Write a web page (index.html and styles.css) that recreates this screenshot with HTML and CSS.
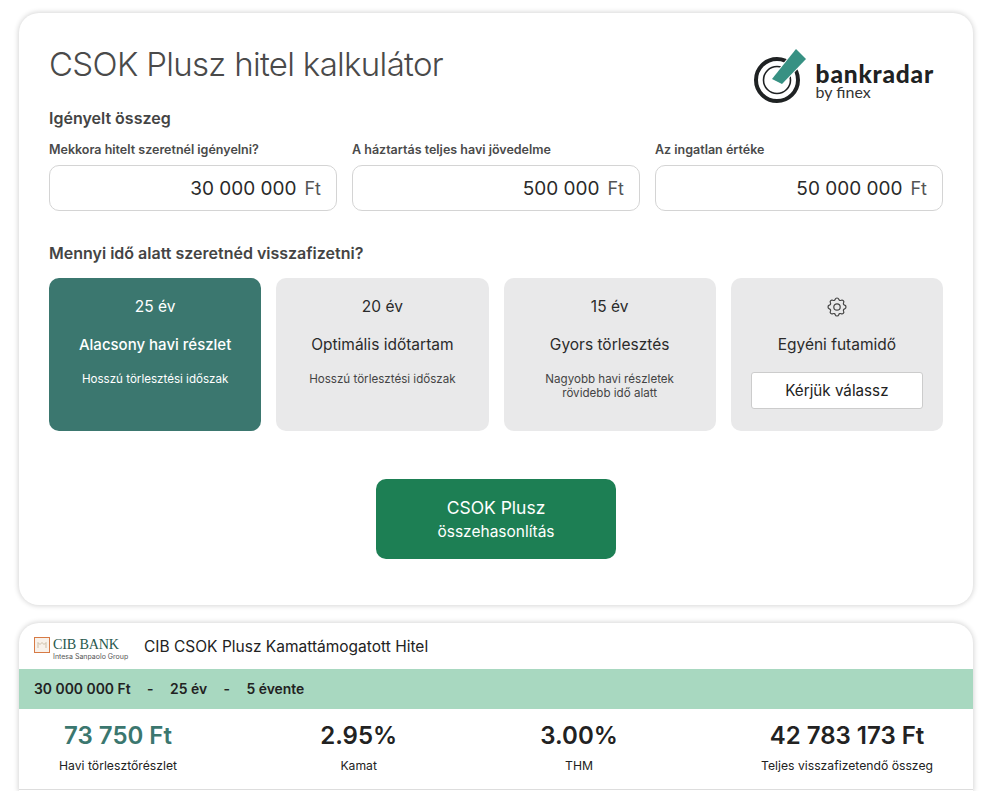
FILE: index.html
```html
<!DOCTYPE html>
<html>

<head>
    <meta charset="UTF-8">
    <meta name="viewport" content="width=device-width, initial-scale=1.0">
    <title>CSOK Plusz hitel kalkulátor</title>
    <link rel="stylesheet" href="styles.css">
</head>

<body>
    <div class="card calc">
        <div class="top">
            <h1>CSOK Plusz hitel kalkulátor</h1>
            <div class="logo">
                <svg class="logo-mark" width="67" height="58" viewBox="0 0 67 58">
                    <circle cx="28" cy="33" r="21" fill="none" stroke="#1f2223" stroke-width="4" />
                    <circle cx="28" cy="33" r="13.5" fill="none" stroke="#1f2223" stroke-width="1.6" />
                    <polygon points="23,32 47,2 57,12 33,37" fill="#379183" stroke="#fff" stroke-width="2" />
                    <polygon points="23,32 47,2 57,12 33,37" fill="#379183" />
                </svg>
                <div class="logo-text">
                    <div class="logo-name">bankradar</div>
                    <div class="logo-sub">by finex</div>
                </div>
            </div>
        </div>

        <h2 class="section-title">Igényelt összeg</h2>
        <div class="fields">
            <div class="field">
                <label>Mekkora hitelt szeretnél igényelni?</label>
                <div class="input"><span class="value">30 000 000</span><span class="unit">Ft</span></div>
            </div>
            <div class="field">
                <label>A háztartás teljes havi jövedelme</label>
                <div class="input"><span class="value">500 000</span><span class="unit">Ft</span></div>
            </div>
            <div class="field">
                <label>Az ingatlan értéke</label>
                <div class="input"><span class="value">50 000 000</span><span class="unit">Ft</span></div>
            </div>
        </div>

        <h2 class="section-title term-title">Mennyi idő alatt szeretnéd visszafizetni?</h2>
        <div class="options">
            <div class="option selected">
                <div class="years">25 év</div>
                <div class="name">Alacsony havi részlet</div>
                <div class="note">Hosszú törlesztési időszak</div>
            </div>
            <div class="option">
                <div class="years">20 év</div>
                <div class="name">Optimális időtartam</div>
                <div class="note">Hosszú törlesztési időszak</div>
            </div>
            <div class="option">
                <div class="years">15 év</div>
                <div class="name">Gyors törlesztés</div>
                <div class="note">Nagyobb havi részletek<br>rövidebb idő alatt</div>
            </div>
            <div class="option">
                <div class="years gear">
                    <svg width="24" height="24" viewBox="0 0 24 24" fill="none" stroke="#444" stroke-width="1.2" stroke-linecap="round" stroke-linejoin="round">
                        <path d="M10.3 3.2c.4-1.6 3-1.6 3.4 0 .3 1.1 1.5 1.6 2.5 1.1 1.5-.9 3.3.9 2.4 2.4-.5 1-.1 2.2 1.1 2.5 1.7.4 1.7 3.2 0 3.6-1.2.3-1.6 1.5-1.1 2.5.9 1.5-.9 3.3-2.4 2.4-1-.5-2.2-.1-2.5 1.1-.4 1.6-3 1.6-3.4 0-.3-1.2-1.5-1.6-2.5-1.1-1.5.9-3.3-.9-2.4-2.4.5-1 .1-2.2-1.1-2.5-1.7-.4-1.7-3.2 0-3.6 1.2-.3 1.6-1.5 1.1-2.5-.9-1.5.9-3.3 2.4-2.4 1 .5 2.2 0 2.5-1.1z" />
                        <circle cx="12" cy="11" r="3.2" />
                    </svg>
                </div>
                <div class="name">Egyéni futamidő</div>
                <button class="pick">Kérjük válassz</button>
            </div>
        </div>

        <div class="actions">
            <button class="compare">
                <span class="compare-main">CSOK Plusz</span>
                <span class="compare-sub">összehasonlítás</span>
            </button>
        </div>
    </div>

    <div class="card offer">
        <div class="offer-head">
            <div class="bank-logo">
                <svg class="bank-mark" width="16" height="16" viewBox="0 0 16 16">
                    <rect x="0.5" y="0.5" width="15" height="15" fill="#f8f1ea" stroke="#d77a45" />
                    <path d="M4 11V5.5l2 2 2-2 2 2 2-2V11" fill="none" stroke="#cdbfa8" stroke-width="1" />
                </svg>
                <div class="bank-text">
                    <div class="bank-name">CIB BANK</div>
                    <div class="bank-sub">Intesa Sanpaolo Group</div>
                </div>
            </div>
            <div class="offer-title">CIB CSOK Plusz Kamattámogatott Hitel</div>
        </div>
        <div class="offer-bar">
            <span>30 000 000 Ft</span><span>-</span><span>25 év</span><span>-</span><span>5 évente</span>
        </div>
        <div class="stats">
            <div class="stat">
                <div class="stat-value green">73 750 Ft</div>
                <div class="stat-label">Havi törlesztőrészlet</div>
            </div>
            <div class="stat">
                <div class="stat-value">2.95%</div>
                <div class="stat-label">Kamat</div>
            </div>
            <div class="stat">
                <div class="stat-value">3.00%</div>
                <div class="stat-label">THM</div>
            </div>
            <div class="stat">
                <div class="stat-value">42 783 173 Ft</div>
                <div class="stat-label">Teljes visszafizetendő összeg</div>
            </div>
        </div>
    </div>
</body>

</html>
```

FILE: styles.css
```css
* {
    margin: 0;
    padding: 0;
    box-sizing: border-box;
}

html {
    overflow: hidden;
    height: 100%;
}

body {
    font-family: 'Inter', 'Liberation Sans', sans-serif;
    background-color: #fff;
    color: #222;
    height: 791px;
    overflow: hidden;
    padding: 13px 15px 0 19px;
}

.card {
    background-color: #fff;
    border-radius: 20px;
    box-shadow: 0 0 5px 1px rgba(0, 0, 0, 0.16);
}

.calc {
    height: 592px;
    padding: 0 30px;
    margin-bottom: 18px;
}

.top {
    display: flex;
    justify-content: space-between;
    height: 92px;
}

h1 {
    font-size: 33px;
    font-weight: 300;
    color: #4a4a4a;
    line-height: 40px;
    padding-top: 31px;
    letter-spacing: -0.68px;
}

.logo {
    display: flex;
    margin: 34px 9px 0 0;
}

.logo-mark {
    display: block;
}

.logo-text {
    padding-top: 17px;
}

.logo-name {
    font-family: 'Lato', sans-serif;
    font-weight: 900;
    font-size: 24.5px;
    line-height: 20px;
    color: #1f2223;
    letter-spacing: 0.8px;
}

.logo-sub {
    font-family: 'Lato', sans-serif;
    font-weight: 400;
    font-size: 16px;
    line-height: 15px;
    color: #333;
}

.section-title {
    font-size: 16px;
    font-weight: 600;
    color: #444;
    line-height: 26px;
}

.fields {
    display: grid;
    grid-template-columns: repeat(3, 288px);
    column-gap: 15px;
    margin-top: 11px;
}

.field label {
    display: block;
    font-size: 12.5px;
    font-weight: 600;
    color: #4a4a4a;
    line-height: 16px;
    margin-bottom: 7px;
}

.input {
    height: 46px;
    border: 1px solid #d4d4d4;
    border-radius: 10px;
    display: flex;
    justify-content: flex-end;
    align-items: center;
    padding: 0 15px;
    font-size: 19px;
}

.value {
    color: #2a2a2a;
}

.unit {
    color: #555;
    margin-left: 8px;
    font-size: 18px;
}

.term-title {
    margin-top: 29px;
}

.options {
    display: grid;
    grid-template-columns: repeat(4, 1fr);
    column-gap: 15px;
    margin-top: 12px;
}

.option {
    height: 153px;
    border-radius: 10px;
    background-color: #e9e9ea;
    color: #2b2b2b;
    text-align: center;
    padding-top: 19px;
}

.option.selected {
    background-color: #3b776f;
    color: #fff;
}

.years {
    font-size: 15.5px;
    line-height: 20px;
}

.gear {
    display: flex;
    justify-content: center;
    align-items: center;
    height: 20px;
    padding-top: 2px;
}

.name {
    font-size: 15.5px;
    font-weight: 400;
    line-height: 20px;
    margin-top: 18px;
}

.selected .name {
    font-size: 15px;
    font-weight: 500;
}

.note {
    font-size: 11.6px;
    line-height: 14px;
    margin-top: 17px;
    color: #444;
}

.selected .note {
    color: #fff;
}

.pick {
    display: block;
    width: 172px;
    height: 37px;
    margin: 17px auto 0;
    background-color: #fff;
    border: 1px solid #ccc;
    border-radius: 3px;
    font-family: inherit;
    font-size: 15.2px;
    color: #222;
}

.actions {
    display: flex;
    justify-content: center;
    margin-top: 48px;
}

.compare {
    width: 240px;
    height: 80px;
    background-color: #1d7f54;
    color: #fff;
    border: 0;
    border-radius: 10px;
    font-family: inherit;
    display: flex;
    flex-direction: column;
    align-items: center;
    justify-content: center;
}

.compare-main {
    font-size: 17.5px;
    line-height: 26px;
}

.compare-sub {
    font-size: 15.5px;
    line-height: 22px;
}

.offer {
    overflow: hidden;
    height: 168px;
    border-radius: 20px 20px 0 0;
}

.offer-head {
    height: 46px;
    display: flex;
    align-items: center;
    padding-left: 15px;
}

.bank-logo {
    display: flex;
    width: 110px;
    padding-top: 5px;
}

.bank-mark {
    margin-right: 3px;
    display: block;
}

.bank-name {
    font-family: 'Liberation Serif', serif;
    font-size: 14.2px;
    line-height: 15px;
    color: #27584c;
    letter-spacing: -0.2px;
}

.bank-sub {
    font-size: 7px;
    line-height: 9px;
    color: #555;
}

.offer-title {
    font-size: 15.5px;
    color: #222;
}

.offer-bar {
    height: 40px;
    background-color: #a8d8c0;
    display: flex;
    align-items: center;
    gap: 16.5px;
    padding-left: 15px;
    font-size: 13.9px;
    font-weight: 600;
    color: #222;
}

.stats {
    display: flex;
    justify-content: space-between;
    height: 81px;
    padding: 0 40px;
    border-bottom: 1px solid #ddd;
    text-align: center;
}

.stat-value {
    font-size: 24px;
    font-weight: 600;
    line-height: 30px;
    margin-top: 12px;
    color: #222;
}

.stat-value.green {
    color: #3b776f;
}

.stat-label {
    font-size: 12.2px;
    line-height: 16px;
    margin-top: 7px;
    color: #222;
}
```
